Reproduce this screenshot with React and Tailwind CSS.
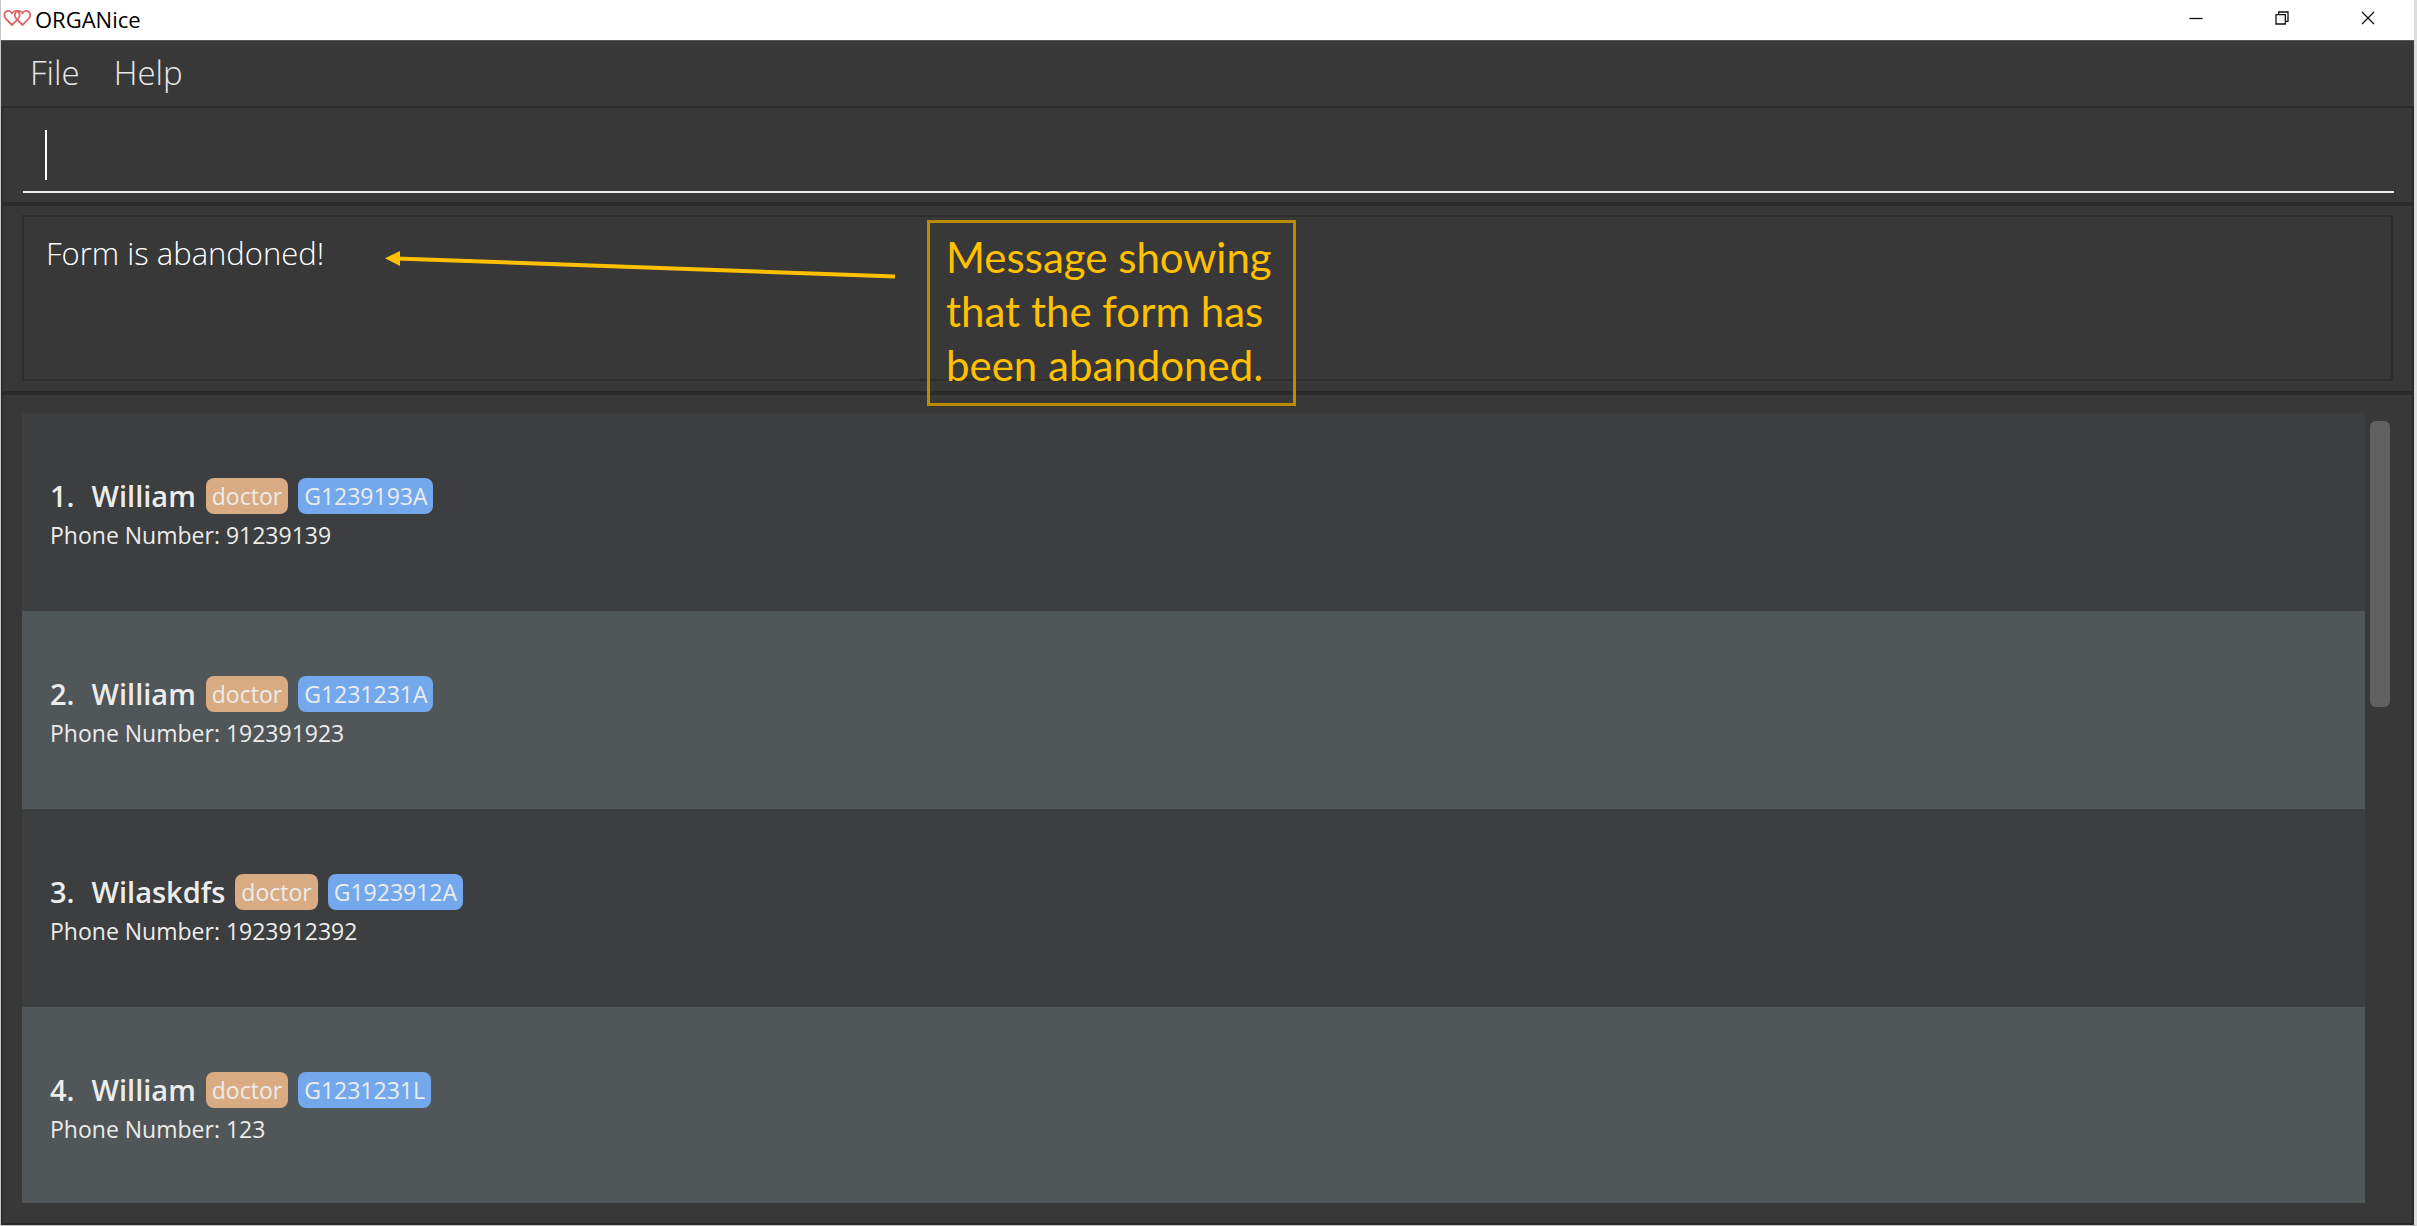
const people = [
  { id: 1, name: "William", role: "doctor", nric: "G1239193A", phone: "91239139" },
  { id: 2, name: "William", role: "doctor", nric: "G1231231A", phone: "192391923" },
  { id: 3, name: "Wilaskdfs", role: "doctor", nric: "G1923912A", phone: "1923912392" },
  { id: 4, name: "William", role: "doctor", nric: "G1231231L", phone: "123" },
];

function HeartsIcon() {
  return (
    <svg className="mb-[2px] h-[18px] w-7" viewBox="0 0 28 18" fill="none" stroke="#e0646a" strokeWidth="1.8" strokeLinejoin="round" aria-hidden="true">
      <path d="M9 16 3 10C.6 7.500 1 4 3 2.500 5 1.200 7.700 1.900 9 4.200 10.300 1.900 13 1.200 15 2.500 17 4 17.400 7.500 15 10Z" />
      <path d="M19.500 16 13.500 10C11.100 7.500 11.500 4 13.500 2.500 15.500 1.200 18.200 1.900 19.500 4.200 20.800 1.900 23.500 1.200 25.500 2.500 27.500 4 27.900 7.500 25.500 10Z" />
    </svg>
  );
}

function TitleBar() {
  const button = "flex h-9 w-[86px] items-center justify-center";
  return (
    <header className="flex h-10 shrink-0 items-start justify-between bg-white">
      <div className="flex h-[38px] items-center gap-1 pl-[2px]">
        <HeartsIcon />
        <h1 className="text-[22px] leading-9 text-black">ORGANice</h1>
      </div>
      <div className="flex pr-[3px]">
        <button type="button" aria-label="Minimize" className={button}>
          <svg className="h-[14px] w-[14px]" viewBox="0 0 14 14" stroke="#111" strokeWidth="1.3" fill="none"><path d="M.5 7.500h13" /></svg>
        </button>
        <button type="button" aria-label="Restore" className={button}>
          <svg className="h-[14px] w-[14px]" viewBox="0 0 14 14" stroke="#111" strokeWidth="1.3" fill="none"><path d="M1 3.700h9.300V13H1ZM3.700 3.700V1H13v9.300h-2.700" /></svg>
        </button>
        <button type="button" aria-label="Close" className={button}>
          <svg className="h-[14px] w-[14px]" viewBox="0 0 14 14" stroke="#111" strokeWidth="1.3" fill="none"><path d="m1 1 12 12M13 1 1 13" /></svg>
        </button>
      </div>
    </header>
  );
}

function MenuBar() {
  return (
    <nav className="flex h-[66px] shrink-0 items-center gap-[34px] border-t border-[#5a5a5a] pb-[2px] pl-[29px] text-[33px] font-light text-[#e8e8e8]">
      <button type="button">File</button>
      <button type="button">Help</button>
    </nav>
  );
}

function CommandBox() {
  return (
    <section className="border-b-4 border-[#2a2a2a] pt-4 pr-[18px] pb-[9px] pl-5">
      <div className="flex items-center border-b-2 border-[#f2f2f2] pt-[6px] pb-[11px] pl-[22px]">
        <span className="h-[50px] w-[2px] bg-white" aria-hidden="true" />
        <input type="text" aria-label="Command" className="h-[50px] min-w-0 flex-1 bg-transparent text-[33px] font-light text-white outline-none" />
      </div>
    </section>
  );
}

function Annotation() {
  return (
    <>
      <svg className="absolute top-11 left-[382px] h-8 w-[511px]" viewBox="0 0 511 32" aria-hidden="true">
        <path d="M12 8.500 510 26.500" stroke="#ffc000" strokeWidth="4" />
        <path d="M0 8.300 15 1v15Z" fill="#ffc000" />
      </svg>
      <aside className="absolute top-[14px] left-[924px] z-10 w-[369px] border-[3px] border-[#bc8c00] pt-[7px] pb-[11px] pl-4 font-['Lato'] text-[42px] leading-[54px] text-[#ffc000]">
        Message showing<br />that the form has<br />been abandoned.
      </aside>
    </>
  );
}

function ResultDisplay() {
  return (
    <section className="relative border-b-4 border-[#2a2a2a] px-[19px] pt-[9px] pb-[10px]">
      <output className="block h-[166px] border-2 border-[#2d2d2d] px-[22px] pt-[11px] text-[31px] leading-[50px] font-light text-white">
        Form is abandoned!
      </output>
      <Annotation />
    </section>
  );
}

function PersonRow({ person }) {
  return (
    <li className="shrink-0 pt-[65px] pr-7 pb-[59px] pl-7 text-[#ececec] odd:bg-[#3c3e3f] even:bg-[#515658]">
      <div className="flex items-center">
        <span className="text-[29px] leading-9 font-semibold">{person.id}.</span>
        <h2 className="ml-[17px] text-[29px] leading-9 font-semibold">{person.name}</h2>
        <span className="ml-[10px] rounded-lg bg-[#d9ab82] px-[6px] text-[23px] leading-9">{person.role}</span>
        <span className="ml-[10px] rounded-lg bg-[#73a9ec] px-[6px] text-[23px] leading-9">{person.nric}</span>
      </div>
      <p className="mt-1 text-[23px] leading-[34px]">Phone Number: {person.phone}</p>
    </li>
  );
}

export default function App() {
  return (
    <div className="h-screen border-r-[3px] border-b border-l border-r-[#dcdcdc] border-b-[#bdbdbd] border-l-[#c8c8c8] bg-[#383838] font-['Open_Sans',sans-serif]">
      <div className="flex h-full flex-col">
        <TitleBar />
        <MenuBar />
        <main className="flex min-h-0 flex-1 flex-col border-x-2 border-y-2 border-[#2b2b2b]">
          <CommandBox />
          <ResultDisplay />
          <section className="flex min-h-0 flex-1 pt-[18px] pr-[22px] pb-5 pl-[19px]">
            <ul className="flex min-w-0 flex-1 flex-col overflow-hidden">
              {people.map((p) => <PersonRow key={p.id} person={p} />)}
            </ul>
            <div className="ml-[5px] py-2">
              <div className="h-[37%] w-5 rounded-md bg-[#616161]" />
            </div>
          </section>
        </main>
      </div>
    </div>
  );
}
